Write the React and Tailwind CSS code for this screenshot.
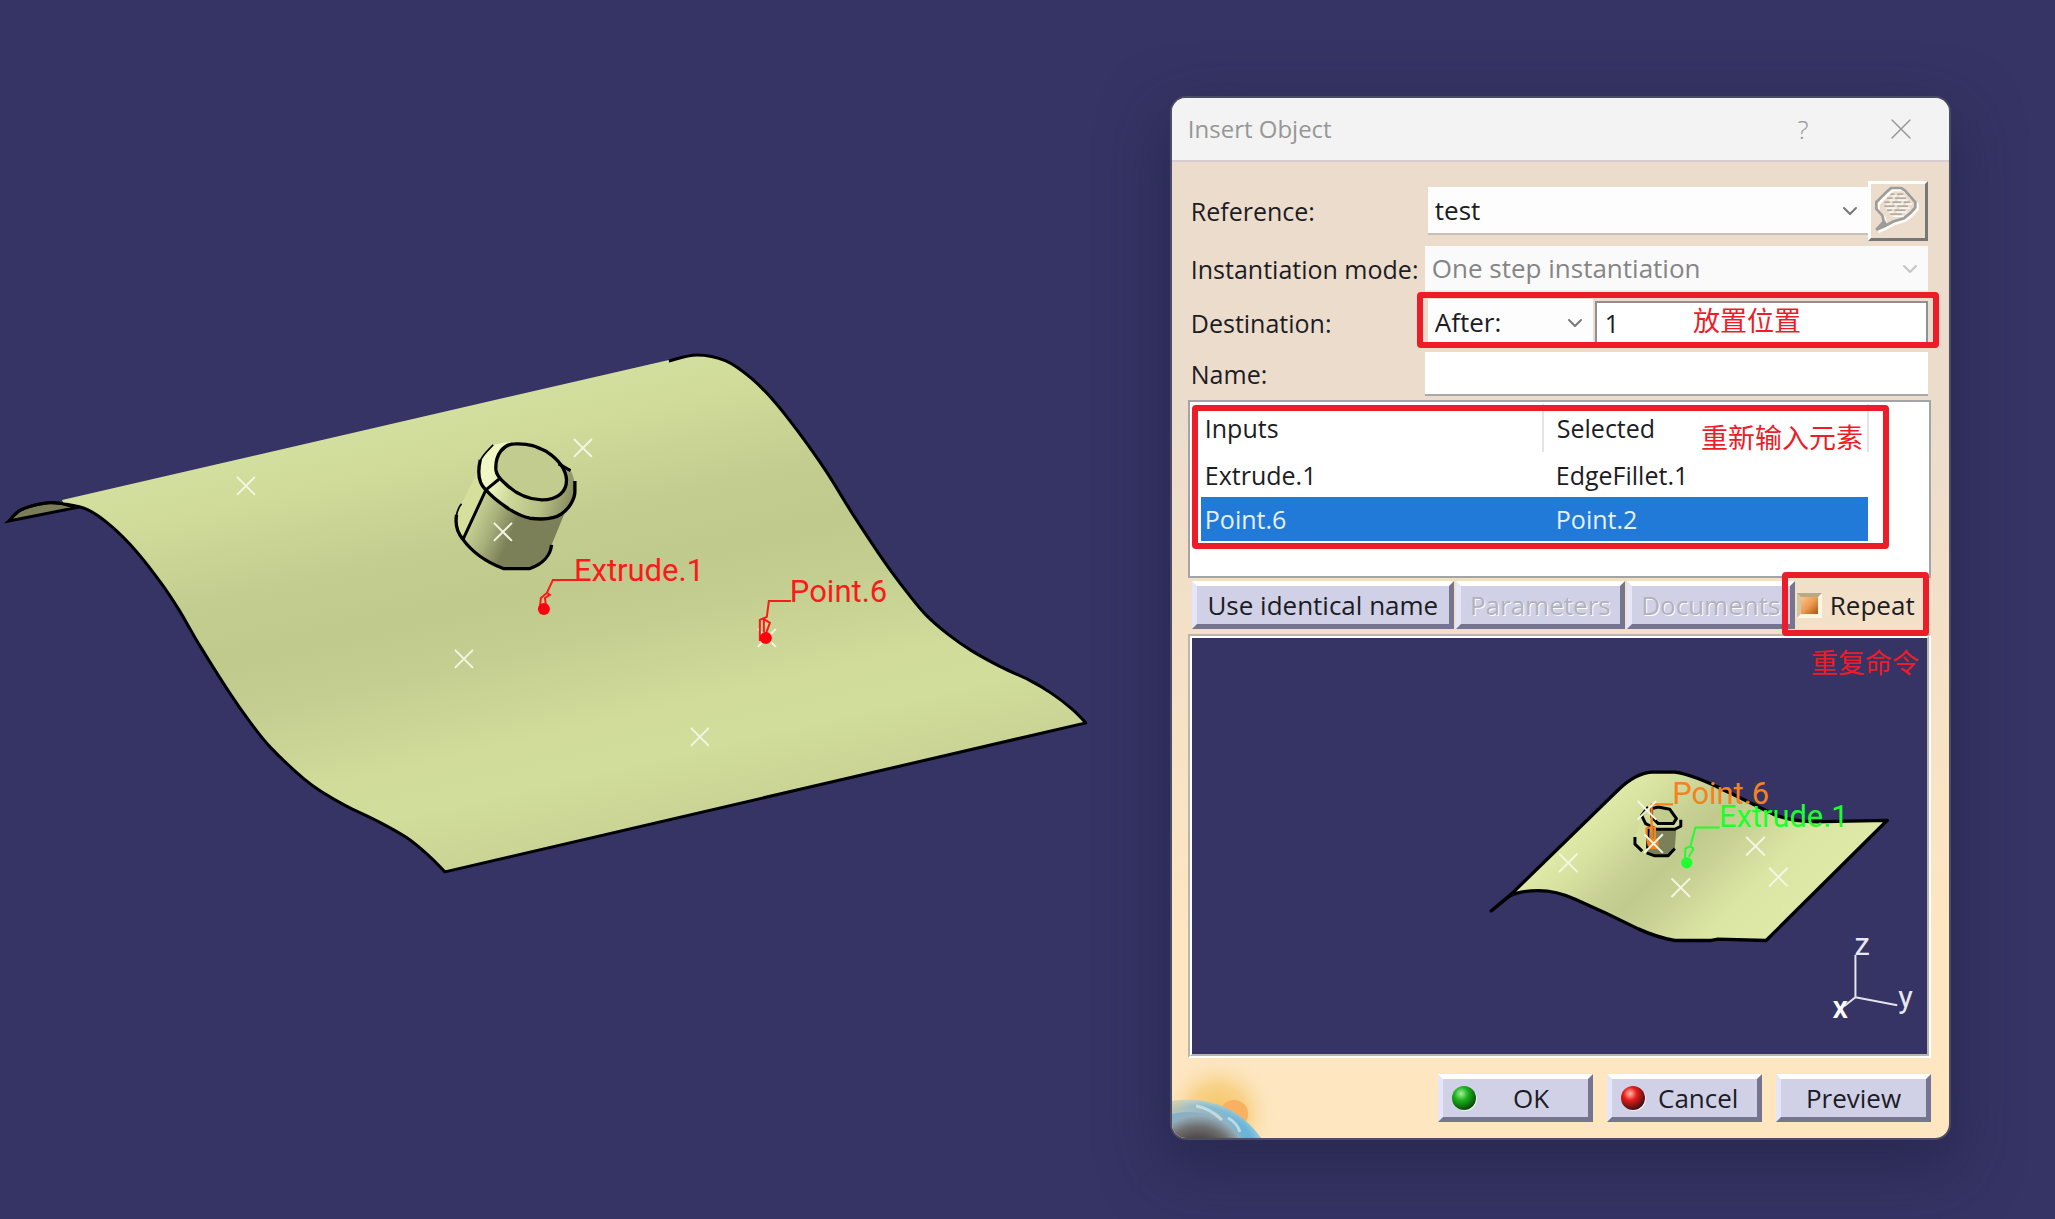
import React, { useState } from "react";
import { ChevronDown, X } from "lucide-react";

const inputs = [
  { name: "Extrude.1", selected: "EdgeFillet.1" },
  { name: "Point.6", selected: "Point.2" },
];

const scenePoints = [
  [246, 486],
  [503, 532],
  [464, 659],
  [583, 448],
  [767, 638],
  [700, 737],
];

const previewPoints = [
  [329, 368],
  [668, 443],
  [893, 318],
  [962, 411],
  [566, 210],
  [586, 310],
];

// The two curved borders of the sheet
const nearEdge = [
  [9, 521], [21, 510], [46, 503], [64, 504], [88, 510], [111, 526], [136, 551], [161, 583], [179, 610],
  [200, 646], [229, 692], [250, 722], [271, 748], [304, 779], [325, 794], [346, 806],
  [379, 822], [407, 838], [429, 856], [445, 872],
];

const farEdge = [
  [669, 361], [697, 355], [726, 361], [751, 378], [774, 401], [797, 430], [826, 471],
  [854, 516], [886, 564], [910, 596], [927, 616], [949, 635], [972, 651], [1001, 667],
  [1029, 680], [1051, 693], [1072, 709], [1086, 723],
];

// Catmull-Rom spline through the points, as bezier segments
const smooth = points =>
  points
    .slice(1)
    .map((end, i) => {
      const start = points[i];
      const before = points[i - 1] || start;
      const after = points[i + 2] || end;
      const c1 = [start[0] + (end[0] - before[0]) / 6, start[1] + (end[1] - before[1]) / 6];
      const c2 = [end[0] - (after[0] - start[0]) / 6, end[1] - (after[1] - start[1]) / 6];
      return `C${c1} ${c2} ${end}`;
    })
    .join("");

const nearVisible = nearEdge.slice(3);

const Cross = ({ x, y, r = 9, width = 2 }) => (
  <path
    d={`M${x - r} ${y - r}L${x + r} ${y + r}M${x + r} ${y - r}L${x - r} ${y + r}`}
    stroke="#f3f6e2"
    strokeWidth={width}
  />
);

const MainScene = () => (
  <svg viewBox="0 0 1166 1219" className="block w-full" fill="none">
    <defs>
      <linearGradient id="surface" gradientUnits="userSpaceOnUse" x1="112" y1="487" x2="214" y2="925">
        <stop offset="0" stopColor="#d3df9e" />
        <stop offset="0.1" stopColor="#d0db9a" />
        <stop offset="0.3" stopColor="#c3cd8f" />
        <stop offset="0.44" stopColor="#c0ca8d" />
        <stop offset="0.56" stopColor="#c3ce90" />
        <stop offset="0.76" stopColor="#d1dc9b" />
        <stop offset="0.86" stopColor="#d1dd9b" />
        <stop offset="1" stopColor="#cad495" />
      </linearGradient>
      <linearGradient id="body" gradientUnits="userSpaceOnUse" x1="120" y1="300" x2="240" y2="352">
        <stop offset="0" stopColor="#c9d494" />
        <stop offset="0.5" stopColor="#a9b17c" />
        <stop offset="1" stopColor="#7b8058" />
      </linearGradient>
      <linearGradient id="fillet" gradientUnits="userSpaceOnUse" x1="180" y1="190" x2="430" y2="260">
        <stop offset="0" stopColor="#f0f7c4" />
        <stop offset="0.25" stopColor="#cfd99a" />
        <stop offset="0.65" stopColor="#b5be83" />
        <stop offset="1" stopColor="#82875d" />
      </linearGradient>
    </defs>

    {/* sheet */}
    <path d={`M9 521${smooth(nearEdge.slice(0, 4))}L75 508Z`} fill="#7a7d55" stroke="#000" strokeWidth="3" />
    <path
      d={`M62 500L669 360${smooth(farEdge)}L445 872${smooth([...nearVisible].reverse())}Z`}
      fill="url(#surface)"
    />
    <path
      d={`M9 521${smooth(nearEdge)}L1086 723${smooth([...farEdge].reverse())}`}
      stroke="#000"
      strokeWidth="3"
      strokeLinejoin="round"
    />

    {/* cylinder with the rounded top edge */}
    <g transform="translate(430 420) scale(0.3333)" strokeLinejoin="round">
      <path d="M145 150L95 252C75 285 75 320 98 357L168 210Z" fill="#d6e09c" />
      <path d="M168 210L100 355C115 378 150 410 220 446H300C330 435 355 405 365 375L408 270L300 295Z" fill="url(#body)" />
      <path
        d="M190 75C160 105 147 125 147 150C147 185 155 200 168 210C190 235 250 285 300 295C340 300 375 296 395 282C415 268 435 240 435 215C435 185 430 160 420 150L385 120L300 72L230 66Z"
        fill="url(#fillet)"
      />
      <path d="M198 150C195 105 220 72 255 72C300 70 320 80 350 95C385 118 408 148 410 180C410 215 385 240 335 240C285 238 250 215 225 190C208 175 200 165 198 150Z" fill="#c2cc8f" />
      <g stroke="#000" strokeWidth="10">
        <path d="M198 150C195 105 220 72 255 72C300 70 320 80 350 95C385 118 408 148 410 180C410 215 385 240 335 240C285 238 250 215 225 190C208 175 200 165 198 150Z" />
        <path d="M151 120C142 160 148 192 168 210C190 235 250 285 300 295C340 300 375 296 395 282C415 268 435 240 435 215V183" />
        <path d="M100 357L168 210L207 178M386 132L422 152" strokeWidth="9" />
        <path d="M80 285C74 320 84 340 98 357C125 395 165 425 220 446H300C340 432 362 405 365 375" />
        <path d="M190 75C170 95 158 105 150 125M95 252C85 262 82 272 79 290" strokeWidth="5" />
      </g>
    </g>

    {scenePoints.map(([x, y]) => (
      <Cross key={`${x}-${y}`} x={x} y={y} />
    ))}

    {/* callouts */}
    <g stroke="#fb1a1a" strokeWidth="2">
      <path d="M590 580H553L547 593L541 598L540 607M546 605L545 598L550 595L547 593" />
      <path d="M791 601H769L767 617L760 620V640H765M764 632V619L770 623L766 634" />
    </g>
    <circle cx="544" cy="609" r="6" fill="#ff0010" />
    <circle cx="766" cy="638" r="6" fill="#ff0010" />
    <g fill="#fb1a1a" fontFamily="Roboto, sans-serif" fontSize="31">
      <text x="574" y="581">Extrude.1</text>
      <text x="790" y="602">Point.6</text>
    </g>
  </svg>
);

const PreviewScene = () => (
  <svg viewBox="0 0 738 418" className="block w-full" fill="none">
    <defs>
      <linearGradient id="miniSurface" gradientUnits="userSpaceOnUse" x1="310" y1="310" x2="765" y2="765">
        <stop offset="0" stopColor="#e0eaa8" />
        <stop offset="0.12" stopColor="#d8e3a1" />
        <stop offset="0.3" stopColor="#c8d194" />
        <stop offset="0.42" stopColor="#c1cb8e" />
        <stop offset="0.54" stopColor="#c8d194" />
        <stop offset="0.78" stopColor="#dce6a4" />
        <stop offset="1" stopColor="#dfe9a7" />
      </linearGradient>
    </defs>
    <g transform="translate(268 103) scale(0.3333)" strokeLinejoin="round">
      <path
        d="M97 513L160 460L480 148C520 110 550 97 580 95H650C700 102 750 125 800 150C850 172 910 205 950 223C990 240 1040 246 1100 244L1290 240L925 602L780 598L760 602H650C620 597 580 585 540 567C480 537 400 500 350 478C310 460 280 452 240 452C200 452 170 458 150 470Z"
        fill="url(#miniSurface)"
        stroke="#000"
        strokeWidth="10"
      />
      <path d="M550 235L528 295C530 315 540 325 560 338L580 262Z" fill="#d6e09c" />
      <path d="M580 255L568 335L590 347H630L650 325L655 260Z" fill="#7b8058" />
      <path d="M550 235L570 200L630 203L668 245L655 267H590Z" fill="#d3dd9a" />
      <g stroke="#000" strokeWidth="9">
        <path d="M580 205L600 200L635 207L655 235L645 250L600 250L580 230Z" fill="#c2cc8f" />
        <path d="M570 200L550 225L562 250L595 267H650L668 258V238" />
        <path d="M530 290V312L552 333M565 338L590 347H630L650 325M570 262L568 325" />
      </g>
      <path d="M645 192H580V320M565 262V285L572 318M566 262H590V310" stroke="#f58220" strokeWidth="7" />
      <rect x="571" y="295" width="30" height="32" fill="#f58220" />
      <path d="M785 262H712L697 318L682 325L680 362M707 325L692 350M695 318L707 325" stroke="#1eff2d" strokeWidth="6" />
      <circle cx="686" cy="368" r="17" fill="#1eff2d" />
      {previewPoints.map(([x, y]) => (
        <Cross key={`${x}-${y}`} x={x} y={y} r={28} width={6} />
      ))}
      <path d="M1194 645V773L1320 797M1194 773L1160 800" stroke="#e4e4ee" strokeWidth="6" />
    </g>
    <g fontFamily="Roboto, sans-serif" fontSize="31">
      <text x="482" y="167" fill="#f58220">Point.6</text>
      <text x="529" y="190" fill="#1eff2d">Extrude.1</text>
      <text x="665" y="318" fill="#e8e8f0">z</text>
      <text x="709" y="371" fill="#e8e8f0">y</text>
      <text x="643" y="381" fill="#fff" fontWeight="500">x</text>
    </g>
  </svg>
);

const BubbleIcon = () => (
  <svg viewBox="0 0 140 140" className="mr-1 mb-1 size-[47px] shrink-0" fill="none">
    {[
      ["#fffdf8", 6],
      ["#9c9c9a", 0],
    ].map(([color, shift]) => (
      <g key={color} stroke={color} transform={`translate(${shift} ${shift})`}>
        <path
          d="M42 16L54 6H84L96 14L126 48V64L112 80L92 96L60 106L34 120L10 130L32 106L28 88L10 68V48Z"
          strokeWidth="8"
        />
        <path
          d="M52 24H64M72 24H90M42 36H58M66 36H98M34 48H50M58 48H84M92 48H110M34 60H64M72 60H104M42 72H56M64 72H96M52 84H86"
          strokeWidth="4"
        />
      </g>
    ))}
    <path d="M14 128L36 102L42 114Z" fill="#9c9c9a" />
  </svg>
);

const Planet = () => (
  <svg viewBox="0 0 110 90" className="absolute bottom-0 left-0 w-[110px]">
    <defs>
      <radialGradient id="glow" gradientUnits="userSpaceOnUse" cx="46" cy="66" r="58">
        <stop offset="0" stopColor="#f6c460" />
        <stop offset="0.5" stopColor="#f7d084" stopOpacity="0.9" />
        <stop offset="1" stopColor="#fde6c0" stopOpacity="0" />
      </radialGradient>
      <radialGradient id="earth" gradientUnits="userSpaceOnUse" cx="26" cy="118" r="68">
        <stop offset="0.4" stopColor="#4a4644" />
        <stop offset="0.58" stopColor="#706f70" />
        <stop offset="0.74" stopColor="#93aebb" />
        <stop offset="0.88" stopColor="#74b4d4" />
        <stop offset="1" stopColor="#c9dccb" />
      </radialGradient>
      <linearGradient id="haze" x1="0" x2="1">
        <stop offset="0" stopColor="#d8c8a0" stopOpacity="0.7" />
        <stop offset="0.4" stopColor="#c8d0c0" stopOpacity="0.2" />
        <stop offset="0.8" stopColor="#58b4e4" stopOpacity="0.5" />
      </linearGradient>
    </defs>
    <rect width="110" height="90" fill="url(#glow)" />
    <circle cx="62" cy="66" r="14" fill="#f9b060" />
    <path d="M0 53C34 48 66 58 89 90H0Z" fill="url(#earth)" />
    <path d="M0 53C34 48 66 58 89 90H70C50 68 30 60 0 66Z" fill="url(#haze)" />
    <path d="M24 58C36 60 44 66 50 72M56 70C62 73 66 78 68 84" stroke="#e8f0f0" strokeOpacity="0.6" strokeWidth="3" fill="none" />
  </svg>
);

const Ball = ({ light, mid, dark }) => (
  <svg viewBox="0 0 26 26" className="size-[26px] shrink-0">
    <defs>
      <radialGradient id={`ball-${mid.slice(1)}`} cx="0.38" cy="0.32" r="0.7">
        <stop offset="0" stopColor={light} />
        <stop offset="0.4" stopColor={mid} />
        <stop offset="1" stopColor={dark} />
      </radialGradient>
    </defs>
    <circle cx="14" cy="14" r="12" fill="#f3f3f8" />
    <circle cx="13" cy="13" r="12" fill={`url(#ball-${mid.slice(1)})`} />
  </svg>
);

const bevel =
  "flex h-12 items-center whitespace-nowrap border-[5px] border-t-white border-r-[#757590] border-b-[#757590] border-l-[#e6e6fa] bg-[#d0d0e6] text-[26px]";

const disabledText = "text-[#b2b2bc] [text-shadow:1px_1px_0_#fff]";

const SelectBox = ({ id, value, disabled, className }) => (
  <div className={`relative h-full max-h-12 ${className}`}>
    <select
      id={id}
      disabled={disabled}
      defaultValue={value}
      className="size-full appearance-none border-b-2 border-[#c4c0ba] bg-[#fdfdfd] pl-[7px] text-[26px] opacity-100 outline-none disabled:border-[#f3efea] disabled:bg-[#fafafa] disabled:text-[#858585]"
    >
      <option>{value}</option>
    </select>
    <ChevronDown
      className={`pointer-events-none absolute top-1/2 right-1.5 size-6 -translate-y-1/2 ${
        disabled ? "text-[#c4c4c4]" : "text-[#777]"
      }`}
      strokeWidth={2}
    />
  </div>
);

const Row = ({ id, label, className, children }) => (
  <div className={`flex items-center px-[3px] ${className}`}>
    <label htmlFor={id} className="w-[234px] shrink-0 whitespace-nowrap">
      {label}
    </label>
    <div className="relative flex h-full min-w-0 flex-1 items-center">{children}</div>
  </div>
);

const note =
  "font-['Noto_Sans_CJK_SC',sans-serif] text-[27px] leading-8 text-[#ec1c28]";

const InsertDialog = () => {
  const [repeat, setRepeat] = useState(true);
  const [active, setActive] = useState("Point.6");

  return (
    <section className="relative mt-[98px] overflow-hidden rounded-[14px] bg-linear-to-b from-[#ecdccc] from-30% to-[#fde6c0] to-80% font-['Open_Sans',sans-serif] text-[25px] leading-8 text-[#1c1c24] shadow-[0_0_0_2px_#4c4c64,0_24px_60px_10px_#20204480]">
      <header className="flex h-16 items-center border-b-2 border-[#d8ccd0] bg-[#f3f3f3] pr-8 pl-4 text-[#979797]">
        <h1 className="flex-1 text-[24px]">Insert Object</h1>
        <button type="button" className="w-10 text-[26px] font-light">
          ?
        </button>
        <button type="button" aria-label="Close" className="ml-[62px] flex size-8 items-center justify-center">
          <X className="size-9 shrink-0" strokeWidth={1} />
        </button>
      </header>

      <Planet />

      <form className="relative flex flex-col pt-5 pr-[18px] pb-4 pl-4" onSubmit={e => e.preventDefault()}>
        <div className="flex flex-col gap-0.5">
          <Row id="reference" label="Reference:" className="h-[58px]">
            <SelectBox id="reference" value="test" className="ml-[3px] flex-1" />
            <button
              type="button"
              aria-label="Comment"
              className="flex size-[60px] items-center justify-center border-3 border-t-white border-r-[#777] border-b-[#777] border-l-white bg-[#ecdccc]"
            >
              <BubbleIcon />
            </button>
          </Row>
          <Row id="mode" label="Instantiation mode:" className="h-[50px] pt-1">
            <SelectBox id="mode" value="One step instantiation" disabled className="flex-1" />
          </Row>
          <Row id="destination" label="Destination:" className="h-[54px] pt-1">
            <SelectBox id="destination" value="After:" className="mr-0.5 ml-[3px] w-[165px]" />
            <input
              aria-label="Destination object"
              defaultValue="1"
              className="h-11 min-w-0 flex-1 border-2 border-[#8e9098] bg-white pl-2 outline-none"
            />
            <div
              className={`pointer-events-none absolute -top-1.5 -right-[11px] bottom-0 -left-2 flex items-center justify-center rounded-sm border-[6px] border-[#ec1c28] ${note}`}
            >
              <span className="ml-[138px]">放置位置</span>
            </div>
          </Row>
          <Row id="name" label="Name:" className="h-12">
            <input id="name" className="h-11 w-full border-b-2 border-[#a8a8a8] bg-white px-2 outline-none" />
          </Row>
        </div>

        <div className="relative mt-0.5 h-[178px] border-2 border-[#a2a4a8] bg-white pt-0.5 pr-[60px] pl-[11px]">
          <table className="w-full table-fixed text-left">
            <thead>
              <tr className="h-12">
                <th className="w-[342px] border-r-2 border-[#e4e4e4] pl-1 font-normal">Inputs</th>
                <th className="border-r-2 border-[#e4e4e4] pl-[13px] font-normal">Selected</th>
              </tr>
            </thead>
            <tbody>
              {inputs.map(row => (
                <tr
                  key={row.name}
                  onClick={() => setActive(row.name)}
                  className={active === row.name ? "h-11 bg-[#217ad8] text-[#e6f0fc]" : "h-[45px]"}
                >
                  <td className="pl-1">{row.name}</td>
                  <td className="pl-[13px]">{row.selected}</td>
                </tr>
              ))}
            </tbody>
          </table>
          <div
            className={`pointer-events-none absolute top-[3px] right-10 bottom-[27px] left-0.5 rounded-sm border-[6px] border-[#ec1c28] ${note}`}
          >
            <span className="absolute top-[10px] right-5">重新输入元素</span>
          </div>
        </div>

        <div className="flex h-14 items-center gap-0.5 pr-0.5 pb-0.5 pl-1">
          <button type="button" className={`${bevel} w-[262px] justify-center`}>
            Use identical name
          </button>
          <button type="button" disabled className={`${bevel} ${disabledText} w-[169px] justify-center`}>
            Parameters
          </button>
          <button type="button" disabled className={`${bevel} ${disabledText} w-[168px] justify-center`}>
            Documents
          </button>
          <label className="relative flex h-full flex-1 items-center gap-2 text-[26px]">
            <input
              type="checkbox"
              checked={repeat}
              onChange={e => setRepeat(e.target.checked)}
              className="size-[25px] shrink-0 appearance-none border-4 border-t-[#b9a987] border-r-[#fdf6e2] border-b-[#fdf6e2] border-l-[#d3c6a4] bg-[#f3e4c4] bg-clip-padding checked:bg-linear-to-br checked:from-[#fbc48a] checked:via-[#ec9a50] checked:to-[#a85410]"
            />
            Repeat
            <span className="pointer-events-none absolute -top-1.5 right-0 -bottom-1 -left-[15px] z-10 rounded-sm border-[6px] border-[#ec1c28]" />
          </label>
        </div>

        <div className="relative border-2 border-[#b9b5b0] border-r-white border-b-white bg-[#353464]">
          <div className="border-2 border-white border-r-[#b9b5b0] border-b-[#b9b5b0]">
            <PreviewScene />
          </div>
          <span className={`absolute top-2.5 right-2.5 ${note}`}>重复命令</span>
        </div>

        <footer className="mt-4 flex justify-end gap-3.5">
          <button type="button" className={`${bevel} w-[155px] gap-9 pl-2`}>
            <Ball light="#a8f0a0" mid="#1eb41e" dark="#064806" />
            OK
          </button>
          <button type="button" className={`${bevel} w-[155px] gap-3 pl-2`}>
            <Ball light="#ffc0a8" mid="#e81c1c" dark="#3c1010" />
            Cancel
          </button>
          <button type="button" className={`${bevel} w-[155px] justify-center`}>
            Preview
          </button>
        </footer>
      </form>
    </section>
  );
};

const App = () => (
  <div className="grid min-h-screen grid-cols-[3fr_2fr] items-start gap-1.5 overflow-hidden bg-[#353464] pr-[106px]">
    <MainScene />
    <InsertDialog />
  </div>
);

export default App;
